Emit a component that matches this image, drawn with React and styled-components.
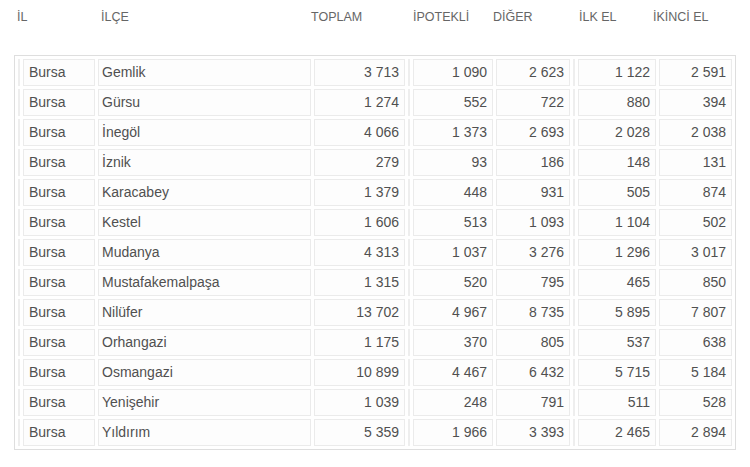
import React from 'react';
import styled, { createGlobalStyle } from 'styled-components';

const GlobalStyle = createGlobalStyle`
  html, body {
    margin: 0;
    padding: 0;
    background: #ffffff;
  }
  body {
    font-family: "Liberation Sans", Arial, sans-serif;
  }
`;

const Page = styled.div`
  width: 750px;
  height: 467px;
  background: #ffffff;
  padding-top: 10px;
  box-sizing: border-box;
`;

const HeaderRow = styled.div`
  height: 14px;
  margin-bottom: 31px;
  padding-left: 17px;
  display: flex;
  font-size: 12.5px;
  color: #666;
  line-height: 14px;
`;

const HeaderCell = styled.div`
  width: ${p => p.w}px;
  flex: none;
  white-space: nowrap;
`;

const Table = styled.table`
  margin-left: 14px;
  width: 722px;
  border: 1px solid #dedede;
  border-collapse: separate;
  border-spacing: 3px;
  table-layout: fixed;
  box-sizing: border-box;
  font-size: 14px;
  color: #505050;
`;

const Col = styled.col`
  width: ${p => p.w}px;
`;

const Cell = styled.td`
  height: 27px;
  box-sizing: border-box;
  border: 1px solid #ebebeb;
  background: #fdfdfd;
  padding: 0 ${p => (p.num ? '5px' : '3px')} 2px ${p => (p.first ? '5px' : '3px')};
  text-align: ${p => (p.num ? 'right' : 'left')};
  white-space: nowrap;
  vertical-align: middle;
`;

const Spacer = styled.td`
  box-sizing: border-box;
  border: 1px solid #eeeeee;
  padding: 0;
`;

const headers = [
  ['İL', 84],
  ['İLÇE', 210],
  ['TOPLAM', 102],
  ['İPOTEKLİ', 80],
  ['DİĞER', 86],
  ['İLK EL', 74],
  ['İKİNCİ EL', 90],
];

const colWidths = [2, 72, 213, 91, 2, 80, 74, 2, 78, 73];

const rows = [
  ['Gemlik', '3 713', '1 090', '2 623', '1 122', '2 591'],
  ['Gürsu', '1 274', '552', '722', '880', '394'],
  ['İnegöl', '4 066', '1 373', '2 693', '2 028', '2 038'],
  ['İznik', '279', '93', '186', '148', '131'],
  ['Karacabey', '1 379', '448', '931', '505', '874'],
  ['Kestel', '1 606', '513', '1 093', '1 104', '502'],
  ['Mudanya', '4 313', '1 037', '3 276', '1 296', '3 017'],
  ['Mustafakemalpaşa', '1 315', '520', '795', '465', '850'],
  ['Nilüfer', '13 702', '4 967', '8 735', '5 895', '7 807'],
  ['Orhangazi', '1 175', '370', '805', '537', '638'],
  ['Osmangazi', '10 899', '4 467', '6 432', '5 715', '5 184'],
  ['Yenişehir', '1 039', '248', '791', '511', '528'],
  ['Yıldırım', '5 359', '1 966', '3 393', '2 465', '2 894'],
];

const fmt = s => s.replace(' ', '\u00a0');

export default function App() {
  return (
    <Page>
      <GlobalStyle />
      <HeaderRow>
        {headers.map(([label, w]) => (
          <HeaderCell key={label} w={w}>{label}</HeaderCell>
        ))}
      </HeaderRow>
      <Table>
        <colgroup>
          {colWidths.map((w, i) => (
            <Col key={i} w={w} />
          ))}
        </colgroup>
        <tbody>
          {rows.map(([ilce, toplam, ipotekli, diger, ilk, ikinci]) => (
            <tr key={ilce}>
              <Spacer />
              <Cell first>Bursa</Cell>
              <Cell>{ilce}</Cell>
              <Cell num>{fmt(toplam)}</Cell>
              <Spacer />
              <Cell num>{fmt(ipotekli)}</Cell>
              <Cell num>{fmt(diger)}</Cell>
              <Spacer />
              <Cell num>{fmt(ilk)}</Cell>
              <Cell num>{fmt(ikinci)}</Cell>
            </tr>
          ))}
        </tbody>
      </Table>
    </Page>
  );
}
